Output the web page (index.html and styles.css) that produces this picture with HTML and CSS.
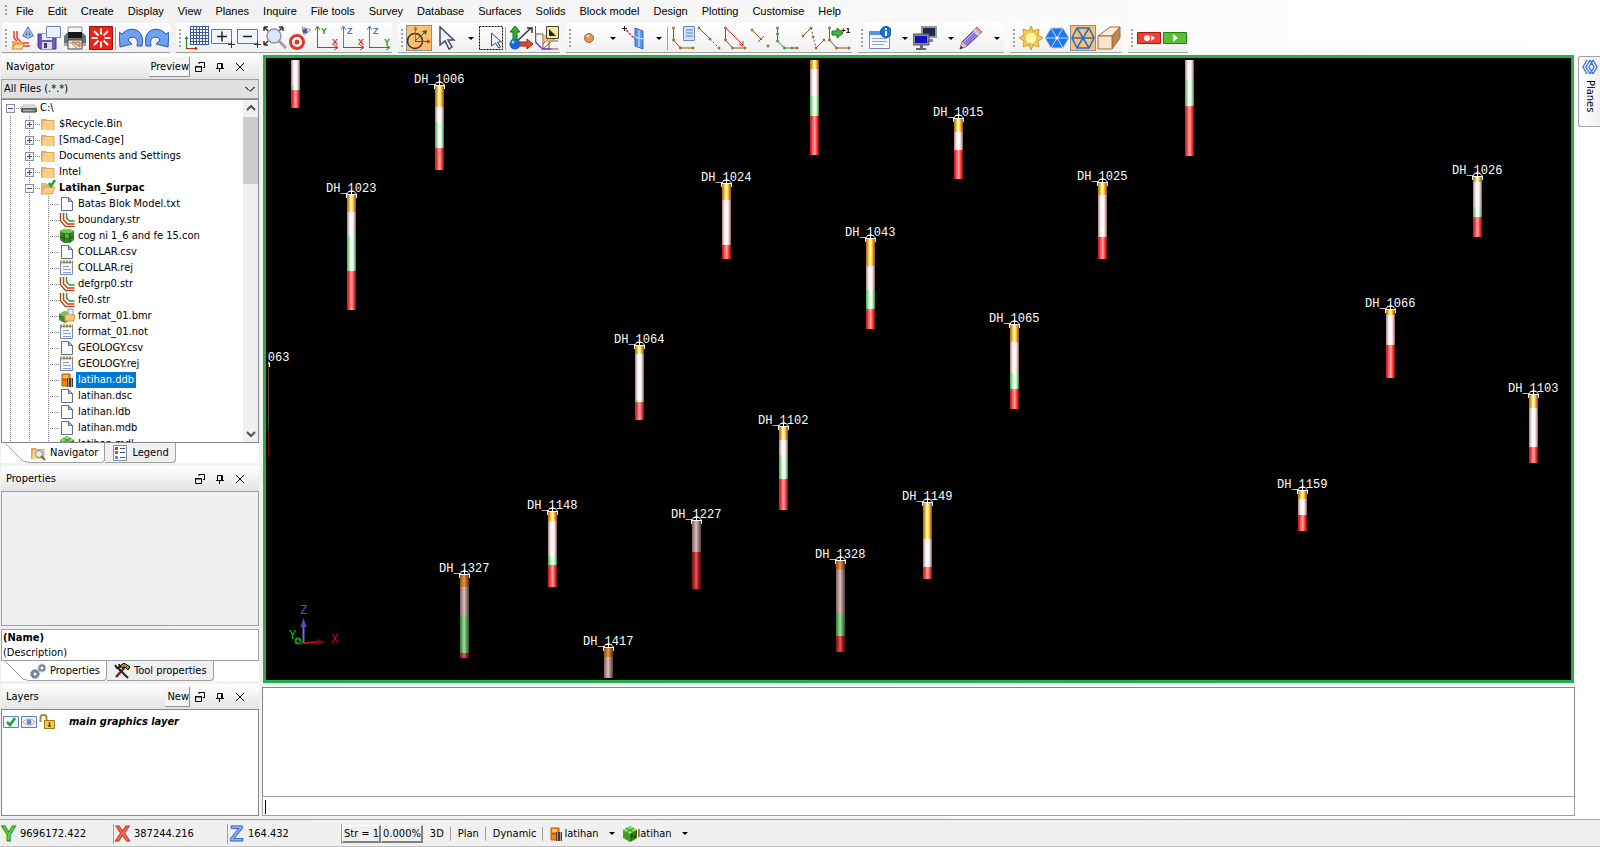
FILE: index.html
```html
<!DOCTYPE html>
<html lang="en">
<head>
    <meta charset="UTF-8">
    <meta name="viewport" content="width=device-width, initial-scale=1.0">
    <title>Latihan_Surpac</title>
    <link rel="stylesheet" href="styles.css">
</head>
<body>
    <!-- shared symbols -->
    <svg class="defs" width="0" height="0">
        <symbol id="folder" viewBox="0 0 16 16"><path d="M1 3h5l1 1h7v10H1z" fill="#e0a860"/><path d="M3 5h11v9H2z" fill="#fad07c"/><path d="M14 4v10" stroke="#d8a878"/></symbol>
        <symbol id="folder-open" viewBox="0 0 16 16"><path d="M1 3h5l1 1h6v10H1z" fill="#e8b878"/><path d="M4 7h11l-3 7H1z" fill="#fad07c" stroke="#dca058"/><path d="M9 3l2 3 4-6" fill="none" stroke="#20a030" stroke-width="2.500"/></symbol>
        <symbol id="drive" viewBox="0 0 16 16"><path d="M3 4h10l3 4v4H0V8z" fill="#909090"/><path d="M3 4h10l2 4H1z" fill="#d8d8d8"/><path d="M1 9h14v3H1z" fill="#b0b0b0" stroke="#303030"/><path d="M12 10h2v1h-2z" fill="#20e040"/></symbol>
        <symbol id="page" viewBox="0 0 16 16"><path d="M2.500 1.500h7l4 4v9h-11z" fill="#fff" stroke="#607090"/><path d="M9.500 1.500v4h4z" fill="#b8c8e0" stroke="#607090"/></symbol>
        <symbol id="note" viewBox="0 0 16 16"><path d="M1.500 2.500h12v12h-12z" fill="#f4f8ff" stroke="#7888a8"/><path d="M1 2h13" stroke="#a88830" stroke-width="3" stroke-dasharray="2 1"/><path d="M4 6.500h6M4 9.500h8M4 12.500h8" stroke="#88a0d0"/></symbol>
        <symbol id="string" viewBox="0 0 16 16"><path d="M1.500 1v8l5 5.500h9" fill="none" stroke="#a05818" stroke-width="1.500"/><path d="M4.500 1v7l4 4h7" fill="none" stroke="#e83020" stroke-width="1.500"/><path d="M7.500 1v5l3 3h5" fill="none" stroke="#30a030" stroke-width="1.500"/></symbol>
        <symbol id="constraint" viewBox="0 0 16 16"><path d="M1 3l4-2h6l4 2v9l-4 3H5l-4-3z" fill="#38882c"/><path d="M1 3l4-2h6l4 2-4 2H5z" fill="#70cc50"/><path d="M5 5v9M11 5v9M1 9l4 1h6l4-1" stroke="#205818" fill="none"/><path d="M6 6h4v4H6z" fill="#58b03c"/></symbol>
        <symbol id="cube" viewBox="0 0 16 16"><path d="M8 0l7 4v8l-7 4-7-4V4z" fill="#48a830"/><path d="M8 0l7 4-7 4-7-4z" fill="#88dc60"/><path d="M8 8l7-4v8l-7 4z" fill="#287818"/><path d="M1 8l7 4 7-4M4 2l7 4v8M12 2L5 6v8" stroke="#388c24" fill="none"/><path d="M9 9l2-1v3l-2 1zM12 10l2-1v2l-2 1z" fill="#184c10"/></symbol>
        <symbol id="blockfolder" viewBox="0 0 16 16"><path d="M6 3l6 3v6l-6 3-6-3V6z" fill="#38902c"/><path d="M6 3l6 3-6 3-6-3z" fill="#70c850"/><path d="M9 1h5v7H9z" fill="#e8f0ff" stroke="#8098c0"/><path d="M6 8l2-2h3l1 1h4l-1 6H6z" fill="#f4c878" stroke="#d09850"/></symbol>
        <symbol id="database" viewBox="0 0 16 16"><path d="M3 2h8v6H3zM3 8h8v6H3z" fill="#f08818" stroke="#c05800"/><path d="M4 3h5v3H4z" fill="#ffc060"/><path d="M8 6h6v9H8z" fill="#503828"/><path d="M9.500 6v9M12.500 6v9" stroke="#b0a090"/></symbol>
        <symbol id="restore" viewBox="0 0 12 12"><path d="M1.500 5.500h6v5h-6zM1 6h7M5 1.500h5.500V7M5 1v2M9 6.500h2" fill="none" stroke="#000"/></symbol>
        <symbol id="pin" viewBox="0 0 12 12"><path d="M3.500 7V2.500h5V7M7.500 2v5M2 7.500h8M5.500 8v3" fill="none" stroke="#000"/></symbol>
        <symbol id="close" viewBox="0 0 12 12"><path d="M2 2l8 8M10 2l-8 8" fill="none" stroke="#000"/></symbol>
        <symbol id="hexagon" viewBox="0 0 24 24"><path d="M6 2h12l6 10-6 10H6L0 12z"/></symbol>
    </svg>

    <header class="top">
        <nav class="menu">
            <i class="grip"></i>
            <button>File</button><button>Edit</button><button>Create</button><button>Display</button><button>View</button><button>Planes</button><button>Inquire</button><button>File tools</button><button>Survey</button><button>Database</button><button>Surfaces</button><button>Solids</button><button>Block model</button><button>Design</button><button>Plotting</button><button>Customise</button><button>Help</button>
        </nav>
        <div class="toolbars">
            <div class="toolbar">
                <i class="grip"></i>
                <button class="tool" aria-label="Open"><svg viewBox="0 0 24 24"><path d="M17 0l6 10-6 3-6-3z" fill="#6080c0"/><path d="M17 3v9M17 3l-4 6 4 2 4-2z" stroke="#c8d8f0" fill="none"/><path d="M3 5v7l3 3M6 5v7l4 4M12 17h6M10 20h9" stroke="#e04030" fill="none" stroke-width="1.500"/><path d="M1 15h4l1 1h6v7H1z" fill="#e8b050"/><path d="M4 18h9l-2 5H1z" fill="#fcdc98" stroke="#c88838"/></svg></button>
                <button class="tool" aria-label="Save"><svg viewBox="0 0 24 24"><path d="M1 8h18v15H3l-2-2z" fill="#7058b8" stroke="#483890"/><path d="M5 8h10v6H5z" fill="#e8e8f8"/><path d="M5 16h10v7H5z" fill="#d8d8e8"/><path d="M7 17h3v5H7z" fill="#403878"/><path d="M9.500.5h14v11h-14z" fill="#e8f2ff" stroke="#6888b8"/></svg></button>
                <button class="tool" aria-label="Print"><svg viewBox="0 0 24 24"><path d="M5 1h14v9H5z" fill="#f4f4f4" stroke="#888"/><path d="M4 7h16l3 3v8H1v-8z" fill="#687078"/><path d="M5 6h14v6H5z" fill="#181818"/><path d="M1 17h22v3H1z" fill="#a0a8b0"/><path d="M5 14h14v9H5z" fill="#eee" stroke="#444"/><path d="M7 16l7 6M9 16h8v5z" stroke="#c07840" fill="#e0b080"/></svg></button>
                <button class="tool" aria-label="Stop"><svg viewBox="0 0 24 24"><path d="M.5.5h23v23H.5z" fill="#ee2018" stroke="#a01008"/><path d="M12 2.500v6M12 15.500v6M2.500 12h6M15.500 12h6M5 5l4.500 4.500M14.500 14.500L19 19M19 5l-4.500 4.500M9.500 14.500L5 19" stroke="#fff" stroke-width="2"/></svg></button>
                <i class="sep"></i>
                <button class="tool" aria-label="Undo"><svg viewBox="0 0 24 24"><path d="M0 6l3 2q8-8 16-3 6 4 4 15h-5q2-8-4-9-4 0-5 3l4 4-12 3z" fill="#70a0f0" stroke="#2858b8"/></svg></button>
                <button class="tool" aria-label="Redo"><svg viewBox="0 0 24 24"><path d="M24 6l-3 2q-8-8-16-3-6 4-4 15h5q-2-8 4-9 4 0 5 3l-4 4 12 3z" fill="#70a0f0" stroke="#2858b8"/></svg></button>
            </div>
            <div class="toolbar">
                <i class="grip"></i>
                <button class="tool" aria-label="Grid"><svg viewBox="0 0 24 24"><path d="M5 .5h18M5 3.500h18M5 6.500h18M5 9.500h18M5 12.500h18M5 15.500h18M5 18.500h18M5.500 0v19M8.500 0v19M11.500 0v19M14.500 0v19M17.500 0v19M20.500 0v19M23.500 0v19" stroke="#3858a0"/><path d="M1.500 23V12" stroke="#109010"/><path d="M1 22.500h10" stroke="#d02818"/><path d="M1.500 10l2 3h-4z" fill="#208020"/><path d="M13 22.500l-3-2v4z" fill="#d02818"/></svg></button>
                <button class="tool" aria-label="Zoom in"><svg viewBox="0 0 24 24"><path d="M.5 3.500h20v14H.5z" fill="#eef5ff" stroke="#5878b0"/><path d="M6 10.500h10M11 5.500v10" stroke="#222" stroke-width="1.500"/><path d="M17 18.500h7M20.500 15v7" stroke="#333"/></svg></button>
                <button class="tool" aria-label="Zoom out"><svg viewBox="0 0 24 24"><path d="M.5 3.500h20v14H.5z" fill="#eef5ff" stroke="#5878b0"/><path d="M6 10.500h9" stroke="#222" stroke-width="1.500"/><path d="M17 18.500h7M20.500 15v7" stroke="#333"/></svg></button>
                <button class="tool" aria-label="Zoom all"><svg viewBox="0 0 24 24"><path d="M1 1h4M1 1v4M1 1l4 4M20 1h-4M20 1v4M20 1l-4 4M1 19h4M1 19v-4M1 19l4-4" stroke="#333" stroke-width="1.500"/><circle cx="11" cy="10" r="7" fill="#d8e8fa" stroke="#9098a8" stroke-width="1.500"/><path d="M16 15l7 7" stroke="#a0a0a8" stroke-width="3"/></svg></button>
                <button class="tool" aria-label="Centre view"><svg viewBox="0 0 24 24"><circle cx="8" cy="16" r="6.500" fill="#fff" stroke="#e03828" stroke-width="3"/><circle cx="8" cy="16" r="2.500" fill="#e03828"/><path d="M13 1l9 3-7 5z" fill="#fff" stroke="#c09090"/><circle cx="16" cy="5" r="2.500" fill="#4060b0"/></svg></button>
                <button class="tool" aria-label="XY view"><svg class="axis-icon" viewBox="0 0 24 24"><path d="M2.500 22V1M0 4l2.500-4L5 4" fill="none" stroke="#209020"/><path d="M2 21.500h20M19 19l4 2.500-4 2.500" fill="none" stroke="#d03020"/><text x="6" y="8" fill="#209020">Y</text><text x="17" y="19" fill="#d03020">X</text></svg></button>
                <button class="tool" aria-label="XZ view"><svg class="axis-icon" viewBox="0 0 24 24"><path d="M2.500 22V1M0 4l2.500-4L5 4" fill="none" stroke="#5878b8"/><path d="M2 21.500h20M19 19l4 2.500-4 2.500" fill="none" stroke="#d03020"/><text x="6" y="8" fill="#5878b8">Z</text><text x="17" y="19" fill="#d03020">X</text></svg></button>
                <button class="tool" aria-label="YZ view"><svg class="axis-icon" viewBox="0 0 24 24"><path d="M2.500 22V1M0 4l2.500-4L5 4" fill="none" stroke="#5878b8"/><path d="M2 21.500h20M19 19l4 2.500-4 2.500" fill="none" stroke="#209020"/><text x="6" y="8" fill="#5878b8">Z</text><text x="17" y="19" fill="#209020">Y</text></svg></button>
            </div>
            <div class="toolbar">
                <i class="grip"></i>
                <button class="tool active" aria-label="Orbit"><svg viewBox="0 0 24 24"><circle cx="8" cy="15" r="7.500" fill="none" stroke="#333" stroke-width="1.500"/><path d="M8.500 15V2" stroke="#6070a0"/><path d="M8 15.500h14" stroke="#d02818"/><path d="M8 15l9-8" stroke="#187818"/><path d="M8.500 0l2 4h-4z" fill="#6070a0"/><path d="M24 15.500l-4-2v4z" fill="#d02818"/><path d="M20 4l-1 5-4-4z" fill="#187818"/></svg></button>
                <button class="tool" aria-label="Select"><svg viewBox="0 0 24 24"><path d="M7 1v18l5-4 4 8 3-2-4-7h6z" fill="#eef4ff" stroke="#444c58" stroke-width="1.500"/></svg></button>
                <button class="drop" aria-label="Select options"></button>
                <button class="tool" aria-label="Select box"><svg viewBox="0 0 24 24"><path d="M.5.5h23v23H.5z" fill="none" stroke="#000" stroke-dasharray="2 1"/><path d="M12.500 7v13l4-3 3 5 2-1-3-5h4z" fill="#eef4ff" stroke="#444c58"/></svg></button>
                <i class="sep"></i>
                <button class="tool" aria-label="Snap axes"><svg viewBox="0 0 24 24"><path d="M6 17L22 2M18 2h5v5" stroke="#333" stroke-width="1.500" fill="none"/><path d="M6 0l5 6H8v10H4V6H1z" fill="#30b030" stroke="#107010"/><path d="M24 18l-6-5v3h-8v4h8v3z" fill="#e84828" stroke="#a02010"/><circle cx="6" cy="18" r="5.500" fill="#1868d0"/><circle cx="4" cy="16" r="1.500" fill="#a0d0ff"/></svg></button>
                <button class="tool" aria-label="Rotate plane"><svg viewBox="0 0 24 24"><path d="M.5 0v16l7 7h16M0 8h8v15M8 18L20 6M14 23v-8h9M8 23l12-11" fill="none" stroke="#905820"/><path d="M.5 8v8l7 7h9" fill="none" stroke="#7040e0" stroke-width="1.500"/><path d="M8 9h12v7H8z" fill="#e0a868" opacity=".7"/><path d="M11.500.5h12v12h-12z" fill="#f8e898" stroke="#444"/><path d="M14 3v7h7z" fill="#222"/></svg></button>
            </div>
            <div class="toolbar">
                <i class="grip"></i>
                <button class="tool" aria-label="Point"><svg viewBox="0 0 24 24"><circle cx="14" cy="12" r="4.500" fill="#d89858" stroke="#a06830"/><circle cx="13" cy="10" r="1.500" fill="#f8d8b0"/></svg></button>
                <button class="drop" aria-label="Point options"></button>
                <button class="tool" aria-label="Digitise on plane"><svg viewBox="0 0 24 24"><path d="M1 2.500h5M3.500 0v5" stroke="#222"/><path d="M5 4l10 10" stroke="#e03848" stroke-width="1.500" stroke-dasharray="3 1"/><path d="M14 2l8 3v18l-8-3z" fill="#5898f0" stroke="#3868c0"/><path d="M18 4v17M14 11l8 2" stroke="#e0f0ff"/></svg></button>
                <button class="drop" aria-label="Plane options"></button>
                <i class="sep"></i>
                <button class="tool" aria-label="String properties"><svg class="string-icon" viewBox="0 0 24 24"><path d="M2.500 2v12l7 8h13"/><circle cx="2.500" cy="2" r="1"/><circle cx="2.500" cy="14" r="1"/><circle cx="9.500" cy="22" r="1"/><circle cx="22" cy="22" r="1"/><path class="sheet" d="M12.500.5h11v14h-11z"/><path class="blue" d="M15 4h7M15 7h7M15 10h7"/></svg></button>
                <button class="tool" aria-label="New segment"><svg class="string-icon" viewBox="0 0 24 24"><path d="M2 2l11 11"/><path class="red dashed" d="M13 13l10 10"/><circle cx="2" cy="2" r="1"/><circle cx="13" cy="13" r="1"/><circle cx="22" cy="22" r="1"/></svg></button>
                <button class="tool" aria-label="Close segment"><svg class="string-icon" viewBox="0 0 24 24"><path d="M2.500 2v12l7 8h13"/><path class="red" d="M3 2l17 17M16 18l4 2v-5"/><circle cx="2.500" cy="2" r="1"/><circle cx="2.500" cy="14" r="1"/><circle cx="9.500" cy="22" r="1"/><circle cx="22" cy="22" r="1"/></svg></button>
                <button class="tool" aria-label="Break segment"><svg class="string-icon" viewBox="0 0 24 24"><path d="M3 4l10 10M9 16l6-6"/><circle cx="3" cy="4" r="1"/><circle cx="19" cy="20" r="1"/></svg></button>
                <button class="tool" aria-label="Smooth segment"><svg class="string-icon" viewBox="0 0 24 24"><path d="M2.500 2v6M17 22h6"/><path class="green" d="M2.500 8v7l7 7H17"/><circle cx="2.500" cy="2" r="1"/><circle class="green" cx="2.500" cy="8" r="1"/><circle class="green" cx="2.500" cy="15" r="1"/><circle class="green" cx="9.500" cy="22" r="1"/><circle class="green" cx="17" cy="22" r="1"/><circle cx="22" cy="22" r="1"/></svg></button>
                <button class="tool" aria-label="Insert point"><svg class="string-icon" viewBox="0 0 24 24"><path d="M2 10l8-8M15 22l8-8"/><path class="red dashed" d="M10 2l5 20"/><circle cx="2" cy="10" r="1"/><circle cx="10" cy="2" r="1"/><circle class="green" cx="12" cy="11" r="1"/><circle cx="15" cy="22" r="1"/><circle cx="23" cy="14" r="1"/></svg></button>
                <button class="tool" aria-label="Next string number"><svg class="string-icon" viewBox="0 0 24 24"><path d="M2.500 2v12l7 8h13"/><circle cx="2.500" cy="2" r="1"/><circle cx="2.500" cy="14" r="1"/><circle cx="9.500" cy="22" r="1"/><circle cx="22" cy="22" r="1"/><path class="next" d="M5 5h5V2l6 5-6 5V9H5z"/><text x="14" y="7">+1</text></svg></button>
            </div>
            <div class="toolbar">
                <i class="grip"></i>
                <button class="tool" aria-label="Layer information"><svg viewBox="0 0 24 24"><path d="M2.500 5.500h20v17h-20z" fill="#f4f8ff" stroke="#788cb0"/><path d="M2 5h21v4H2z" fill="#5090f0"/><path d="M5 12.500h15M5 15.500h15M5 18.500h12" stroke="#90a8c8"/><circle cx="19" cy="6" r="5.500" fill="#1878d0" stroke="#0850a0"/><path d="M19 5v5M19 2v2" stroke="#fff" stroke-width="2"/></svg></button>
                <button class="drop" aria-label="Layer options"></button>
                <button class="tool" aria-label="Displays"><svg viewBox="0 0 24 24"><path d="M8 0h16v12H8z" fill="#9098a0"/><path d="M10 2h12v8H10z" fill="#202850"/><path d="M14 13h6v3h-6z" fill="#889"/><path d="M0 8h16v11H0z" fill="#888c90" stroke="#555"/><path d="M2 10h12v7H2z" fill="#1810b8"/><path d="M7 19h3v3H7zM3 22h10v2H3z" fill="#666"/></svg></button>
                <button class="drop" aria-label="Display options"></button>
                <button class="tool" aria-label="Edit"><svg viewBox="0 0 24 24"><path d="M1 23l2-7L18 1l5 5L8 20z" fill="#9078d8" stroke="#5848a0"/><path d="M18 1l5 5-3 3-5-5z" fill="#f09098"/><path d="M14 5l5 5 2-2-5-5z" fill="#d0d0d8"/><path d="M1 23l2-7 5 4z" fill="#e8c898"/><path d="M1 23l1-3 2 2z" fill="#111"/><path d="M5 16L15 6" stroke="#c0b0f0"/></svg></button>
                <button class="drop" aria-label="Edit options"></button>
            </div>
            <div class="toolbar">
                <i class="grip"></i>
                <button class="tool" aria-label="Light"><svg viewBox="0 0 24 24"><path d="M12 0l2 5 6-2-1 6 5 3-5 3 1 6-6-2-2 5-2-5-6 2 1-6-5-3 5-3-1-6 6 2z" fill="#f4cc48" stroke="#c8a038"/><circle cx="12" cy="12" r="6" fill="#fff4a8" stroke="#e0b840"/></svg></button>
                <button class="tool" aria-label="Shaded"><svg viewBox="0 0 24 24" fill="#1878f8" stroke="#d8c0b0"><use href="#hexagon"/><path d="M1 12h22M6 2l12 20M18 2L6 22" stroke-width="1" stroke="#c8d8f0"/><circle cx="12" cy="12" r="1.500" fill="#fff"/></svg></button>
                <button class="tool active" aria-label="Wireframe"><svg viewBox="0 0 24 24" fill="none" stroke="#1870d0" stroke-width="1.500"><path d="M6 2h12l5 10-5 10H6L1 12zM1 12h22M6 2l12 20M18 2L6 22"/></svg></button>
                <button class="tool" aria-label="Perspective"><svg viewBox="0 0 24 24" stroke="#a86828"><path d="M1 10L13 1h10L15 10z" fill="#f8ece0"/><path d="M15 10l8-9v11l-8 11z" fill="#b88858"/><path d="M1 10h14v13H1z" fill="#f8e4d0"/></svg></button>
            </div>
            <div class="toolbar">
                <i class="grip"></i>
                <button class="tool" aria-label="Record macro"><svg viewBox="0 0 24 24"><path d="M.5 6.500h23v11H.5z" fill="#f04030" stroke="#b01810"/><circle cx="10" cy="12" r="3" fill="#fff"/><path d="M14 9l4 3-4 3z" fill="#fff"/></svg></button>
                <button class="tool" aria-label="Play macro"><svg viewBox="0 0 24 24"><path d="M.5 6.500h23v11H.5z" fill="#58c030" stroke="#208010"/><path d="M10 8l5 4-5 4z" fill="#fff"/></svg></button>
            </div>
        </div>
    </header>

    <main class="workspace">
        <aside class="dock">
            <section class="panel navigator">
                <div class="panel-head"><h2>Navigator</h2><button class="text-button">Preview</button><button class="head-button" aria-label="Float"><svg><use href="#restore"/></svg></button><button class="head-button" aria-label="Pin"><svg><use href="#pin"/></svg></button><button class="head-button" aria-label="Close"><svg><use href="#close"/></svg></button></div>
                <select class="filter" aria-label="File filter"><option>All Files (.*.*)</option></select>
                <div class="tree-box">
                    <ul class="tree">
                        <li><div class="row root"><i class="cell"><b class="expander"></b></i><svg class="icon"><use href="#drive"/></svg><span>C:\</span></div>
                            <ul>
                                <li><div class="row"><i class="cell"><b class="expander plus"></b></i><svg class="icon"><use href="#folder"/></svg><span>$Recycle.Bin</span></div></li>
                                <li><div class="row"><i class="cell"><b class="expander plus"></b></i><svg class="icon"><use href="#folder"/></svg><span>[Smad-Cage]</span></div></li>
                                <li><div class="row"><i class="cell"><b class="expander plus"></b></i><svg class="icon"><use href="#folder"/></svg><span>Documents and Settings</span></div></li>
                                <li><div class="row"><i class="cell"><b class="expander plus"></b></i><svg class="icon"><use href="#folder"/></svg><span>Intel</span></div></li>
                                <li><div class="row"><i class="cell"><b class="expander"></b></i><svg class="icon"><use href="#folder-open"/></svg><span class="current">Latihan_Surpac</span></div>
                                    <ul>
                                        <li class="row"><i class="cell"></i><svg class="icon"><use href="#page"/></svg><span>Batas Blok Model.txt</span></li>
                                        <li class="row"><i class="cell"></i><svg class="icon"><use href="#string"/></svg><span>boundary.str</span></li>
                                        <li class="row"><i class="cell"></i><svg class="icon"><use href="#constraint"/></svg><span>cog ni 1_6 and fe 15.con</span></li>
                                        <li class="row"><i class="cell"></i><svg class="icon"><use href="#page"/></svg><span>COLLAR.csv</span></li>
                                        <li class="row"><i class="cell"></i><svg class="icon"><use href="#note"/></svg><span>COLLAR.rej</span></li>
                                        <li class="row"><i class="cell"></i><svg class="icon"><use href="#string"/></svg><span>defgrp0.str</span></li>
                                        <li class="row"><i class="cell"></i><svg class="icon"><use href="#string"/></svg><span>fe0.str</span></li>
                                        <li class="row"><i class="cell"></i><svg class="icon"><use href="#blockfolder"/></svg><span>format_01.bmr</span></li>
                                        <li class="row"><i class="cell"></i><svg class="icon"><use href="#note"/></svg><span>format_01.not</span></li>
                                        <li class="row"><i class="cell"></i><svg class="icon"><use href="#page"/></svg><span>GEOLOGY.csv</span></li>
                                        <li class="row"><i class="cell"></i><svg class="icon"><use href="#note"/></svg><span>GEOLOGY.rej</span></li>
                                        <li class="row"><i class="cell"></i><svg class="icon"><use href="#database"/></svg><span class="selected">latihan.ddb</span></li>
                                        <li class="row"><i class="cell"></i><svg class="icon"><use href="#page"/></svg><span>latihan.dsc</span></li>
                                        <li class="row"><i class="cell"></i><svg class="icon"><use href="#page"/></svg><span>latihan.ldb</span></li>
                                        <li class="row"><i class="cell"></i><svg class="icon"><use href="#page"/></svg><span>latihan.mdb</span></li>
                                        <li class="row"><i class="cell"></i><svg class="icon"><use href="#cube"/></svg><span>latihan.mdl</span></li>
                                    </ul>
                                </li>
                            </ul>
                        </li>
                    </ul>
                    <div class="scrollbar"><svg viewBox="0 0 15 17"><path d="M4 10l4-4 4 4" fill="none" stroke="#505050" stroke-width="2"/></svg><i class="thumb"></i><svg viewBox="0 0 15 17"><path d="M4 7l4 4 4-4" fill="none" stroke="#505050" stroke-width="2"/></svg></div>
                </div>
                <div class="tabs">
                    <svg class="slope" viewBox="0 0 28 20"><path d="M4 0l18 18 6 1.500" fill="none" stroke="#a0a0a0"/></svg>
                    <button class="tab"><svg class="icon"><use href="#folder"/><circle cx="9" cy="9" r="3.500" fill="#e0f0ff" stroke="#8090a0"/><path d="M11 11l4 4" stroke="#806040" stroke-width="2"/></svg>Navigator</button>
                    <button class="tab"><svg class="icon"><path d="M1.500.5h13v15h-13z" fill="#fff" stroke="#8090b0"/><path d="M3 2h3v3H3z" fill="#e03020"/><path d="M3 6h3v3H3z" fill="#20a030"/><path d="M3 11h3v3H3z" fill="#5090f0"/><path d="M8 3.500h5M8 7.500h5M8 12.500h5" stroke="#405080"/></svg>Legend</button>
                </div>
            </section>

            <section class="panel properties">
                <div class="panel-head"><h2>Properties</h2><button class="head-button" aria-label="Float"><svg><use href="#restore"/></svg></button><button class="head-button" aria-label="Pin"><svg><use href="#pin"/></svg></button><button class="head-button" aria-label="Close"><svg><use href="#close"/></svg></button></div>
                <div class="property-grid"></div>
                <div class="description"><strong>(Name)</strong><span>(Description)</span></div>
                <div class="tabs">
                    <svg class="slope" viewBox="0 0 28 20"><path d="M4 0l18 18 6 1.500" fill="none" stroke="#a0a0a0"/></svg>
                    <button class="tab"><svg class="icon" fill="none" stroke="#788498"><circle cx="5" cy="11" r="3" stroke-width="3"/><circle cx="12" cy="5" r="2.500" stroke-width="2"/><circle cx="5" cy="11" r="4.500" stroke-dasharray="1 2"/><circle cx="12" cy="5" r="4" stroke-dasharray="1 1"/></svg>Properties</button>
                    <button class="tab"><svg class="icon"><path d="M2 14L11 4" stroke="#802018" stroke-width="2.500"/><path d="M6 3l4-3 6 4-2 3-3-3-2 1z" fill="#a09020" stroke="#000"/><path d="M3 4l11 11M1 2l2 3 3-1-1-3" stroke="#222" stroke-width="2" fill="none"/></svg>Tool properties</button>
                </div>
            </section>

            <section class="panel layers">
                <div class="panel-head"><h2>Layers</h2><button class="text-button">New</button><button class="head-button" aria-label="Float"><svg><use href="#restore"/></svg></button><button class="head-button" aria-label="Pin"><svg><use href="#pin"/></svg></button><button class="head-button" aria-label="Close"><svg><use href="#close"/></svg></button></div>
                <div class="layer-list">
                    <div class="layer">
                        <svg class="icon"><path d="M.5 2.500h15v11H.5z" fill="#f4f8ff" stroke="#6080b8"/><path d="M4 8l3 3 5-7" fill="none" stroke="#20a028" stroke-width="2.500"/></svg>
                        <svg class="icon"><path d="M.5 2.500h15v11H.5z" fill="#e8f0ff" stroke="#6080b8"/><path d="M2 8q6-6 12 0-6 6-12 0z" fill="#fff" stroke="#c89898"/><circle cx="8" cy="8" r="2.500" fill="#6888d0"/></svg>
                        <svg class="icon"><path d="M1.500 8V3q0-2 3-2t3 2v4" fill="none" stroke="#b08820" stroke-width="2"/><path d="M5.500 6.500h10v8h-10z" fill="#f0c850" stroke="#a07818"/><path d="M10.500 8v4M9 12h3" stroke="#604810" stroke-width="1.500"/></svg>
                        <span>main graphics layer</span>
                    </div>
                </div>
            </section>
        </aside>

        <div class="centre">
            <div class="viewport">
                <div class="scene" id="scene">
                    <svg class="triad" width="60" height="52" viewBox="0 0 60 52"><path d="M15.500 42V21" stroke="#7070d0" stroke-width="2"/><path d="M15.500 17l3 9h-6z" fill="#5050b8"/><path d="M16 42l16-1" stroke="#b01818" stroke-width="2"/><path d="M38 41l-9-3v6z" fill="#780808"/><circle cx="10" cy="40" r="2.500" fill="none" stroke="#10a018" stroke-width="2"/><path d="M11 41l4 2" stroke="#106010" stroke-width="2"/><text x="12" y="13" fill="#5050e0">Z</text><text x="1" y="38" fill="#10c010">Y</text><text x="43" y="42" fill="#d00808">X</text></svg>
                </div>
            </div>
            <textarea class="messages" aria-label="Messages" readonly></textarea>
            <input class="command" type="text" aria-label="Command">
        </div>

        <div class="side">
            <button class="side-tab"><svg viewBox="0 0 16 16" fill="none" stroke="#4878d8" stroke-width="1.500"><path d="M5 1L1 8l4 7M8 1L4 8l4 7M11 1L7 8l4 7M8 1l4 7-4 7M11 1l4 7-4 7"/></svg>Planes</button>
        </div>
    </main>

    <footer class="status">
        <div class="coordinate y"><b>Y</b>9696172.422</div>
        <div class="coordinate x"><b>X</b>387244.216</div>
        <div class="coordinate z"><b>Z</b>164.432</div>
        <button class="readout">Str = 1</button><button class="readout">0.000%</button>
        <span class="mode">3D</span><span class="mode">Plan</span><span class="mode">Dynamic</span>
        <button class="source"><svg class="icon"><use href="#database"/></svg>latihan<i class="arrow"></i></button>
        <button class="source"><svg class="icon"><use href="#cube"/></svg>latihan<i class="arrow"></i></button>
    </footer>

    <script src="script.js"></script>
</body>
</html>
```
FILE: styles.css
```css
* {
    box-sizing: border-box;
}

body {
    margin: 0;
    height: 100vh;
    display: flex;
    flex-direction: column;
    background: linear-gradient(90deg, #f0f0f0, #fff);
    color: #000;
    font-family: "DejaVu Sans Condensed", "Noto Sans", sans-serif;
    font-size: 11px;
    line-height: 16px;
    overflow: hidden;
}

button {
    font: inherit;
    color: inherit;
    padding: 0;
    border: 0;
    background: none;
    white-space: nowrap;
}

.defs {
    position: absolute;
}

.icon {
    width: 16px;
    height: 16px;
    flex: none;
}

.grip {
    width: 8px;
    flex: none;
    background: repeating-linear-gradient(#a0a0a0 0 2px, transparent 2px 4px) 3px 4px / 2px 18px no-repeat;
}

/* menu and toolbars */
.menu {
    display: flex;
    gap: 2px;
    height: 22px;
}

.menu .grip {
    background-size: 2px 12px;
    background-position: 5px 5px;
}

.menu button {
    padding: 0 6px;
    font-family: "Liberation Sans", Arial, sans-serif;
}

.toolbars {
    display: flex;
    gap: 6px;
    height: 32px;
    padding: 1px 2px;
}

.toolbar {
    display: flex;
    height: 30px;
    padding-top: 2px;
    border-bottom: 1px solid #a0a0a0;
    border-radius: 4px 4px 0 0;
    background: linear-gradient(#fff, #f0f0f0);
}

.tool {
    width: 26px;
    height: 26px;
    padding: 1px;
}

.tool svg {
    display: block;
    width: 24px;
    height: 24px;
}

.tool.active {
    padding: 0;
    border: 1px solid #909090;
    background: #ffbe70;
}

.axis-icon text {
    font: bold 9px "Liberation Sans", sans-serif;
}

.string-icon {
    fill: none;
    stroke: #905818;
    stroke-width: 1px;
}

.string-icon circle {
    fill: #e8a860;
}

.string-icon .red {
    stroke: #d82828;
}

.string-icon .dashed {
    stroke-dasharray: 2 2;
}

.string-icon .blue {
    stroke: #6080c0;
}

.string-icon .green {
    stroke: #209828;
}

.string-icon .sheet {
    fill: #d0e0f8;
    stroke: #6888c0;
}

.string-icon .next {
    fill: #40b840;
    stroke: #107818;
}

.string-icon text {
    font: bold 8px "Liberation Sans", sans-serif;
    fill: #000;
    stroke: none;
}

.sep {
    width: 4px;
    margin: 2px 0;
    background: linear-gradient(#a0a0a0, #a0a0a0) 1px 0 / 1px 100% no-repeat;
}

.drop {
    width: 20px;
}

.drop::after,
.arrow {
    content: "";
    display: block;
    width: 0;
    margin-left: 10px;
    border: 3px solid transparent;
    border-top-color: #000;
    border-bottom: 0;
}

/* docked panels */
.workspace {
    flex: 1;
    display: flex;
    min-height: 0;
}

.dock {
    width: 259px;
    flex: none;
    display: flex;
    flex-direction: column;
    gap: 3px;
    padding: 0 0 3px 1px;
}

.panel {
    display: flex;
    flex-direction: column;
    min-height: 0;
}

.navigator {
    flex: 410 0 0;
}

.properties {
    flex: 215 0 0;
}

.layers {
    flex: 132 0 0;
}

.panel-head {
    display: flex;
    align-items: center;
    flex: none;
    height: 25px;
    padding: 0 9px 0 5px;
    background: linear-gradient(#fff, #e4e4e4);
}

.panel-head h2 {
    flex: 1;
    margin: 0;
    font-size: 11px;
    font-weight: normal;
}

.text-button {
    height: 20px;
    padding: 2px 0 0 2px;
    border-right: 1px solid #909090;
    border-bottom: 1px solid #909090;
    background: #f4f4f4;
}

.head-button {
    width: 20px;
    height: 12px;
}

.head-button svg {
    display: block;
    width: 12px;
    height: 12px;
    margin: auto;
}

.filter {
    height: 20px;
    flex: none;
    padding: 0 2px;
    border: 1px solid #a0a0a0;
    border-radius: 0;
    appearance: none;
    color: #000;
    font: inherit;
    background: linear-gradient(45deg, transparent 50%, #555 50% 62%, transparent 62%) 243px 7px / 5px 5px no-repeat,
        linear-gradient(-45deg, transparent 50%, #555 50% 62%, transparent 62%) 248px 7px / 5px 5px no-repeat, #e1e1e1;
}

.tree-box {
    flex: 1;
    display: flex;
    min-height: 0;
    border: 1px solid #828790;
    background: #fff;
    overflow: hidden;
}

.tree,
.tree ul {
    margin: 0;
    padding: 0;
    list-style: none;
}

.tree {
    flex: 1;
    white-space: nowrap;
}

.tree ul {
    padding-left: 19px;
    background: repeating-linear-gradient(#808080 0 1px, transparent 1px 2px) 8px 0 / 1px 100% no-repeat;
}

.row {
    display: flex;
    align-items: center;
    height: 16px;
}

.row .icon {
    margin-right: 1px;
}

.cell {
    width: 19px;
    height: 16px;
    flex: none;
    padding: 4px;
    background: repeating-linear-gradient(#808080 0 1px, transparent 1px 2px) 8px 0 / 1px 100% no-repeat,
        repeating-linear-gradient(90deg, #808080 0 1px, transparent 1px 2px) 8px 8px / 11px 1px no-repeat;
}

.root .cell {
    background-size: 1px 0, 11px 1px;
}

.expander {
    display: block;
    width: 9px;
    height: 9px;
    border: 1px solid #909090;
    background: linear-gradient(#3050a0, #3050a0) 1px 3px / 5px 1px no-repeat, #f4f4f4;
}

.expander.plus {
    background: linear-gradient(#3050a0, #3050a0) 1px 3px / 5px 1px no-repeat,
        linear-gradient(#3050a0, #3050a0) 3px 1px / 1px 5px no-repeat, #f4f4f4;
}

.row span {
    padding: 0 2px;
}

.current {
    font-weight: bold;
}

.selected {
    background: #0078d7;
    color: #fff;
}

.scrollbar {
    width: 15px;
    display: flex;
    flex-direction: column;
    background: #f0f0f0;
}

.scrollbar svg {
    width: 15px;
    height: 17px;
}

.thumb {
    height: 67px;
    margin-bottom: auto;
    background: #cdcdcd;
}

.tabs {
    display: flex;
    flex: none;
    height: 20px;
    background: #fff;
}

.slope {
    width: 28px;
    height: 20px;
}

.tab {
    display: flex;
    align-items: center;
    gap: 4px;
    padding: 0 6px 0 1px;
    border: 1px solid #a0a0a0;
    border-width: 0 1px 1px 0;
    border-radius: 0 0 4px 0;
}

.tab + .tab {
    padding-left: 7px;
    background: #f0f0f0;
}

.property-grid {
    flex: 1;
    border: 1px solid #a0a0a0;
    background: #f0f0f0;
}

.description {
    display: flex;
    flex-direction: column;
    flex: none;
    height: 32px;
    margin-top: 3px;
    padding: 0 1px;
    border: 1px solid #a0a0a0;
    background: #fff;
    line-height: 15px;
}

.layer-list {
    flex: 1;
    border: 1px solid #828790;
    background: #fff;
}

.layer {
    display: flex;
    align-items: center;
    gap: 2px;
    padding: 4px 1px;
}

.layer span {
    padding-left: 12px;
    font-weight: bold;
    font-style: italic;
}

/* graphics */
.centre {
    flex: 1;
    display: flex;
    flex-direction: column;
    min-width: 0;
    padding: 1px 0 3px 3px;
}

.viewport {
    flex: 1;
    min-height: 0;
    margin: 0 1px 4px;
    padding: 2px;
    border: 3px solid #20b048;
    background: #000;
}

.scene {
    position: relative;
    height: 100%;
    overflow: hidden;
}

.triad {
    position: absolute;
    left: 20px;
    bottom: 25px;
    font: 12px "DejaVu Sans Mono", monospace;
}

.hole {
    position: absolute;
    width: 9px;
}

.hole span {
    position: absolute;
    left: -21px;
    top: -12px;
    color: #fff;
    font: 12px/14px "Liberation Mono", monospace;
}

.hole svg {
    position: absolute;
    left: -2px;
    top: -5px;
}

.hole i {
    display: block;
}

.hole .o { background: linear-gradient(90deg, #b06820, #f8a838 25%, #ffff90 40% 55%, #f8a030 75%, #804810); }
.hole .w { background: linear-gradient(90deg, #a88080, #f8dcdc 25%, #fff 35% 60%, #e8c0c0 80%, #705050); }
.hole .g { background: linear-gradient(90deg, #50a858, #90f090 25%, #fff 40% 60%, #90e898 80%, #387040); }
.hole .r { background: linear-gradient(90deg, #b81820, #ff4040 25%, #ff9c9c 45% 55%, #ff3838 75%, #701010); }
.hole .do { background: linear-gradient(90deg, #8c5418, #c07830 30%, #e89c50 45%, #a86420 70%, #583008); }
.hole .dw { background: linear-gradient(90deg, #806464, #b89898 30%, #e0c4c4 45%, #a08080 70%, #503c3c); }
.hole .dg { background: linear-gradient(90deg, #3c7840, #70b870 30%, #a0e8a0 45%, #609c60 70%, #2c502c); }
.hole .dr { background: linear-gradient(90deg, #801418, #b83030 30%, #e86060 45%, #a02020 70%, #500808); }

.messages {
    height: 110px;
    flex: none;
    border: 1px solid #828790;
    background: #fff;
    resize: none;
}

.command {
    height: 20px;
    flex: none;
    margin-top: -1px;
    border: 1px solid #a0a0a0;
    background: linear-gradient(#000, #000) 2px 3px / 1px 14px no-repeat, #fff;
}

.side {
    width: 25px;
    flex: none;
    padding: 2px 0 0 3px;
}

.side-tab {
    display: flex;
    align-items: center;
    gap: 5px;
    width: 22px;
    height: 71px;
    padding: 2px;
    border: 1px solid #a0a0a0;
    border-right: 0;
    border-radius: 3px 0 0 3px;
    background: linear-gradient(90deg, #fff, #f0f0f0);
    writing-mode: vertical-rl;
}

.side-tab svg {
    width: 16px;
    height: 16px;
}

/* status bar */
.status {
    display: flex;
    align-items: center;
    flex: none;
    height: 28px;
    padding-top: 1px;
    border-top: 1px solid #a0a0a0;
    border-bottom: 1px solid #c0c0c0;
    background: #f0f0f0;
}

.coordinate {
    display: flex;
    align-items: center;
    width: 114px;
    gap: 3px;
    height: 20px;
    border-right: 1px solid #a0a0a0;
}

.coordinate b {
    width: 17px;
    font: bold 22px/20px "Liberation Sans", sans-serif;
    text-align: center;
}

.y b { color: #60d840; -webkit-text-stroke: 1px #209018; }
.x b { color: #f07060; -webkit-text-stroke: 1px #c83828; }
.z b { color: #90b8ff; -webkit-text-stroke: 1px #3868c8; }

.readout {
    height: 18px;
    padding: 0 0 0 1px;
    border: 1px solid #fff;
    border-right: 2px solid #808080;
    border-bottom: 2px solid #808080;
}

.mode {
    padding: 0 6px 0 7px;
    border-right: 1px solid #a0a0a0;
    line-height: 14px;
}

.source {
    display: flex;
    align-items: center;
    padding-left: 5px;
}

.arrow {
    margin-right: 2px;
}
```
FILE: script.js
```js
// [collar id, left, top, [colour, height], ...]
const holes = [
    ['', 23, 0, ['w', 26], ['g', 4], ['r', 18]],
    ['DH_1006', 167, 25, ['o', 22], ['w', 15], ['g', 26], ['r', 22]],
    ['', 542, 0, ['o', 9], ['w', 27], ['g', 20], ['r', 39]],
    ['DH_1015', 686, 58, ['o', 14], ['w', 18], ['r', 29]],
    ['', 917, 0, ['w', 20], ['g', 26], ['r', 50]],
    ['DH_1023', 79, 134, ['o', 18], ['w', 23], ['g', 36], ['r', 39]],
    ['DH_1024', 454, 123, ['o', 17], ['w', 45], ['r', 14]],
    ['DH_1025', 830, 122, ['o', 13], ['w', 42], ['r', 22]],
    ['DH_1026', 1205, 116, ['o', 6], ['w', 25], ['g', 10], ['r', 20]],
    ['DH_1043', 598, 178, ['o', 28], ['w', 24], ['g', 19], ['r', 20]],
    ['DH_1063', -8, 303, ['do', 8], ['dw', 43], ['dg', 16], ['dr', 27]],
    ['DH_1064', 367, 285, ['o', 9], ['w', 46], ['g', 2], ['r', 18]],
    ['DH_1065', 742, 264, ['o', 18], ['w', 31], ['g', 16], ['r', 20]],
    ['DH_1066', 1118, 249, ['o', 6], ['w', 30], ['r', 33]],
    ['DH_1102', 511, 366, ['o', 14], ['w', 15], ['g', 24], ['r', 31]],
    ['DH_1103', 1261, 334, ['o', 14], ['w', 39], ['r', 16]],
    ['DH_1148', 280, 451, ['o', 10], ['w', 35], ['g', 9], ['r', 22]],
    ['DH_1149', 655, 442, ['o', 37], ['w', 28], ['r', 12]],
    ['DH_1159', 1030, 430, ['o', 9], ['w', 16], ['r', 16]],
    ['DH_1227', 424, 460, ['dw', 32], ['dr', 37]],
    ['DH_1327', 192, 514, ['do', 13], ['dw', 28], ['dg', 38], ['dr', 5]],
    ['DH_1328', 568, 500, ['do', 10], ['dw', 43], ['dg', 23], ['dr', 16]],
    ['DH_1417', 336, 587, ['do', 10], ['dw', 30]]
];

const collar = '<svg width="13" height="10" viewBox="0 0 13 10" fill="none" stroke="#fff">' +
    '<path d="M1.500 9V5l3-3h4l3 3v4M6.500 0v5M2 5.500h9"/></svg>';

const scene = document.getElementById('scene');

holes.forEach(function ([id, left, top, ...parts]) {
    const hole = document.createElement('div');
    hole.className = 'hole';
    hole.style.left = left + 'px';
    hole.style.top = top + 'px';
    hole.innerHTML = parts.map(function ([colour, height]) {
        return '<i class="' + colour + '" style="height:' + height + 'px"></i>';
    }).join('') + (id ? '<span>' + id + '</span>' + collar : '');
    scene.appendChild(hole);
});
```
